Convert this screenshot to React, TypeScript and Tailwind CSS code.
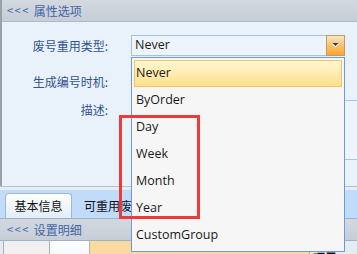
import React from "react";

const cjk = { fontFamily: '"Noto Sans CJK SC", "Noto Sans", sans-serif' };
const latin = { fontFamily: '"Segoe UI", "Open Sans", "Noto Sans", "Noto Sans CJK SC", sans-serif' };

function Arrow() {
  return (
    <svg width="9" height="7" viewBox="0 0 9 7">
      <path d="M1 2 L8 2 L4.5 5.5 Z" fill="#ffffff" opacity="0.8" />
      <path d="M1.5 1 L7.5 1 L4.5 4 Z" fill="#21406e" />
    </svg>
  );
}

export default function App() {
  const items = ["Never", "ByOrder", "Day", "Week", "Month", "Year", "CustomGroup"];
  return (
    <div className="relative w-[357px] h-[254px] overflow-hidden bg-[#e8f0f9]" style={cjk}>
      {/* top section */}
      <div className="flex flex-col border-l-2 border-[#9aa0a8]">
        <div className="h-[22px] flex items-center pl-[5px] gap-[4px] bg-gradient-to-b from-[#d3d9e0] to-[#c5cdd6] border-b border-[#b0bac6] text-[#4265a8] text-[12px]">
          <span className="tracking-[1.5px] text-[11px]">&lt;&lt;&lt;</span>
          <span>属性选项</span>
        </div>
        <div className="h-[164px] bg-[#e9f1fa] flex flex-col text-[12px] text-[#32538f]">
          <div className="mt-[13px] h-[21px] flex items-center">
            <div className="w-[106px] text-right">废号重用类型:</div>
            <div className="ml-[23px] w-[214px] h-[21px] flex items-center border border-[#a9c1df] bg-[#edf4fc]">
              <span className="flex-1 pl-[3px] text-[12.5px] text-[#1a1a1a]" style={latin}>Never</span>
              <div className="w-[19px] h-[21px] -my-[1px] -mr-[1px] flex items-center justify-center border border-[#b8a06a] bg-gradient-to-b from-[#f6e7c3] via-[#fdc36a] to-[#ffa425]">
                <Arrow />
              </div>
            </div>
          </div>
          <div className="mt-[15px] h-[21px] flex items-center">
            <div className="w-[106px] text-right">生成编号时机:</div>
          </div>
          <div className="mt-[8px] flex items-start">
            <div className="w-[106px] text-right mt-[1px]">描述:</div>
            <div className="ml-[23px] flex-1 h-[60px] border border-[#aac4e6] border-r-0 bg-[#edf4fc]" />
          </div>
        </div>
      </div>
      {/* tab strip */}
      <div className="h-[32px] border-t border-[#b8c2cd] bg-[#c1dbfa] flex flex-col">
        <div className="h-[3px] bg-[#e4edf8]" />
        <div className="flex items-end h-[28px] pl-[5px] gap-[12px]">
          <div className="w-[67px] h-[25px] rounded-t-[4px] border border-b-0 border-[#9fb8d8] bg-gradient-to-b from-[#ffffff] to-[#e2edf9] flex items-center justify-center text-[12px] text-[#111]">
            基本信息
          </div>
          <div className="h-[25px] flex items-center text-[12px] text-[#111]">可重用废号</div>
        </div>
      </div>
      {/* second header */}
      <div className="h-[23px] flex items-center pl-[7px] gap-[4px] bg-gradient-to-b from-[#d2d8df] to-[#c6ced7] border-t border-[#9fb1c6] border-b border-[#8e969f] text-[#4265a8] text-[12px]">
        <span className="tracking-[1.5px] text-[11px]">&lt;&lt;&lt;</span>
        <span>设置明细</span>
      </div>
      {/* grid row */}
      <div className="h-[20px] flex bg-[#e4ebf3] pl-[3px]">
        <div className="w-[47px] border-l border-[#6c6c6c] border-r border-[#b0b0b0] bg-[#f0f0f0]" />
        <div className="w-[40px] border-r border-[#b0b0b0] bg-gradient-to-b from-[#ffffff] to-[#eef4fb]" />
        <div className="w-[220px] bg-[#fbd9a1] border-r border-[#c0a070]" />
        <div className="pl-[3px] pt-[8px] text-[12px] font-bold text-[#111]">项目</div>
      </div>

      {/* dropdown list */}
      <div className="absolute left-[131px] top-[57px] w-[214px] h-[195px] border border-[#6e9bd6] bg-[#f6f6f6] pt-[2px] px-[2px]" style={latin}>
        {items.map((it, i) => (
          <div
            key={it}
            className={
              i === 0
                ? "h-[27px] flex items-center pl-[1px] border border-[#f3c36e] bg-gradient-to-b from-[#fff7d2] to-[#ffe08a] text-[12.5px] text-[#1a1a1a]"
                : "h-[27px] flex items-center pl-[2px] text-[12.5px] text-[#1a1a1a]"
            }
          >
            {it}
          </div>
        ))}
      </div>

      {/* red highlight box */}
      <div className="absolute left-[119px] top-[115px] w-[81px] h-[104px] border-[3px] border-[#f03a3a]" />
    </div>
  );
}
